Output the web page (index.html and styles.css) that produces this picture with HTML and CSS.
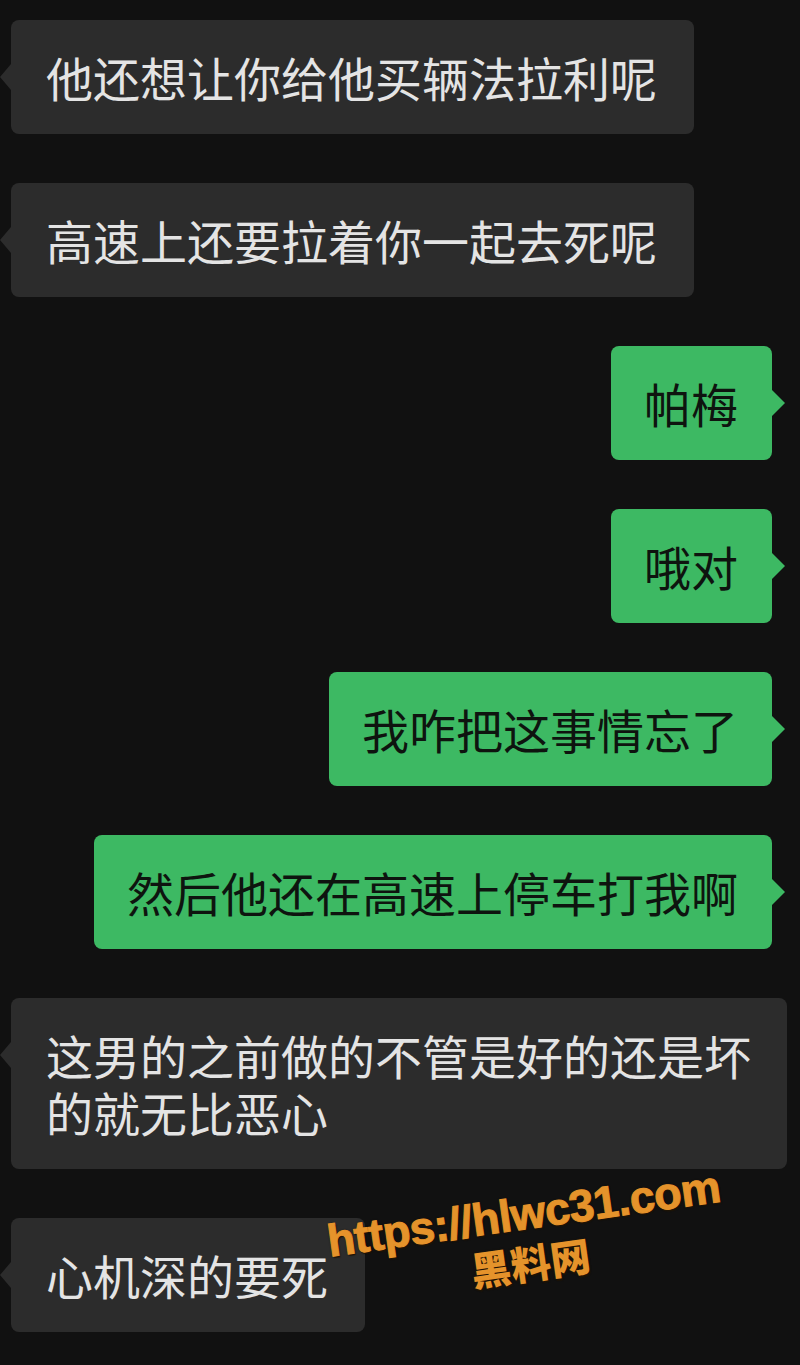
FILE: index.html
```html
<html lang="zh-CN"><head>
    <meta charset="UTF-8">
    <meta name="viewport" content="width=device-width, initial-scale=1.0">
    <title>聊天记录</title>
    <link rel="stylesheet" href="styles.css">
</head>
<body>
    <div id="chat">
        <div class="row left"><div class="bubble">他还想让你给他买辆法拉利呢</div></div>
        <div class="row left"><div class="bubble">高速上还要拉着你一起去死呢</div></div>
        <div class="row right"><div class="bubble">帕梅</div></div>
        <div class="row right"><div class="bubble">哦对</div></div>
        <div class="row right"><div class="bubble">我咋把这事情忘了</div></div>
        <div class="row right"><div class="bubble">然后他还在高速上停车打我啊</div></div>
        <div class="row left"><div class="bubble wide">这男的之前做的不管是好的还是坏的就无比恶心</div></div>
        <div class="row left"><div class="bubble">心机深的要死</div></div>
    </div>

    <div id="watermark">
        <div class="wm-url">https://hlwc31.com</div>
        <div class="wm-name">黑料网</div>
    </div>
</body></html>
```

FILE: styles.css
```css
body {
    margin: 0;
    background-color: #111111;
    font-family: "Noto Sans CJK SC", "Noto Sans", sans-serif;
    height: 1365px;
    overflow: hidden;
    position: relative;
}
#chat {
    display: flex;
    flex-direction: column;
    gap: 49px;
    padding: 20px 0 0 11px;
}
.row {
    display: flex;
}
.row.left {
    justify-content: flex-start;
}
.row.right {
    justify-content: flex-end;
    padding-right: 28px;
}
.bubble {
    position: relative;
    box-sizing: border-box;
    max-width: 779px;
    padding: 28px 37px 29px 35px;
    font-size: 47px;
    line-height: 57px;
    border-radius: 8px;
}
.bubble.wide {
    padding-right: 34px;
    max-width: 776px;
}
.left .bubble {
    background-color: #2c2c2c;
    color: #e4e4e4;
}
.right .bubble {
    background-color: #3db963;
    color: #0e140f;
    padding-left: 33px;
    padding-right: 34px;
}
.bubble::before {
    content: "";
    position: absolute;
    top: 44px;
    width: 0;
    height: 0;
    border-top: 13px solid transparent;
    border-bottom: 13px solid transparent;
}
.left .bubble::before {
    left: -11px;
    border-right: 11px solid #2c2c2c;
}
.right .bubble::before {
    right: -13px;
    border-left: 13px solid #3db963;
}

/* watermark over the chat */
#watermark {
    position: absolute;
    left: 320px;
    top: 1190px;
    width: 414px;
    transform: rotate(-8deg);
    transform-origin: center;
    text-align: center;
    color: #e5932b;
    font-weight: bold;
    text-shadow: 1px 2px 1px #1e1405, 0 0 2px #1e1405;
}
.wm-url {
    font-family: "Liberation Sans", Arial, sans-serif;
    font-size: 45px;
    line-height: 48px;
    letter-spacing: -0.5px;
    -webkit-text-stroke: 1px #e5932b;
}
.wm-name {
    font-family: "Noto Sans CJK SC", sans-serif;
    font-size: 40px;
    line-height: 48px;
    font-weight: 900;
}
```
